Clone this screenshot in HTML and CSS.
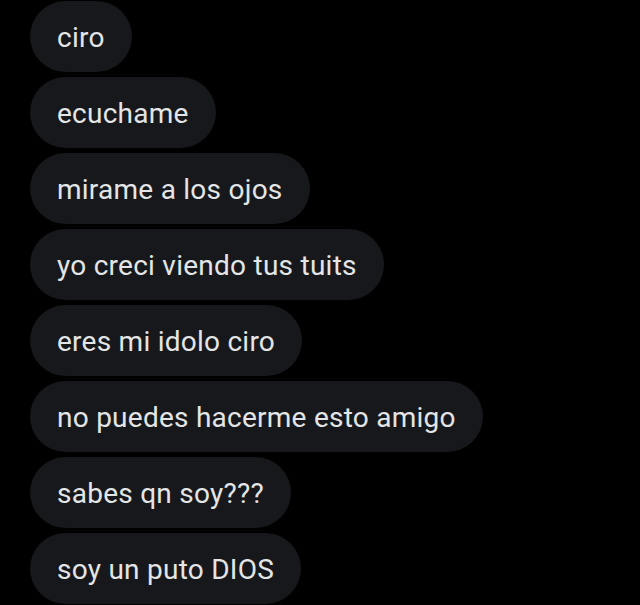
FILE: index.html
```html
<!DOCTYPE html>
<html>
<head>
<meta charset="utf-8">
<link rel="stylesheet" href="styles.css">
</head>
<body>
<div class="thread">
  <div class="bubble">ciro</div>
  <div class="bubble">ecuchame</div>
  <div class="bubble">mirame a los ojos</div>
  <div class="bubble">yo creci viendo tus tuits</div>
  <div class="bubble">eres mi idolo ciro</div>
  <div class="bubble">no puedes hacerme esto amigo</div>
  <div class="bubble">sabes qn soy???</div>
  <div class="bubble">soy un puto DIOS</div>
</div>
</body>
</html>
```
FILE: styles.css
```css
html, body {
  margin: 0;
  padding: 0;
  background: #000;
}
.thread {
  display: flex;
  flex-direction: column;
  align-items: flex-start;
  gap: 5px;
  padding: 1px 0 0 30px;
}
.bubble {
  box-sizing: border-box;
  height: 71px;
  display: flex;
  align-items: center;
  padding: 2px 27px 0;
  border-radius: 36px;
  background: #17181b;
  color: #e3e5e6;
  font-family: Roboto, "Noto Sans", sans-serif;
  font-size: 28px;
  letter-spacing: 0.25px;
}
```
